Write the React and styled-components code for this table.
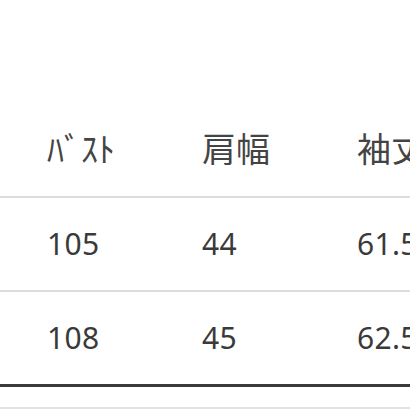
import React from "react";
import styled, { createGlobalStyle } from "styled-components";

const Global = createGlobalStyle`
  html, body { margin: 0; padding: 0; background: #fff; overflow: hidden; }
  body { font-family: "Noto Sans", "Noto Sans CJK JP", sans-serif; }
`;

const Page = styled.div`
  width: 410px;
  height: 410px;
  overflow: hidden;
  padding-top: 104px;
  box-sizing: border-box;
`;

const Table = styled.div`
  width: 620px;
  border-bottom: 3px solid #3a3a3a;
`;

const Row = styled.div`
  display: grid;
  grid-template-columns: repeat(4, 155px);
  height: ${(p) => p.$h}px;
  align-items: center;
  border-bottom: ${(p) => (p.$last ? "none" : "2px solid #dcdcdc")};
`;

const Cell = styled.div`
  padding-left: 47px;
  white-space: nowrap;
  color: ${(p) => (p.$head ? "#444" : "#3a3a3a")};
  font-family: ${(p) =>
    p.$head
      ? '"Noto Sans CJK JP", sans-serif'
      : '"Noto Sans", "Noto Sans CJK JP", sans-serif'};
  font-size: ${(p) => (p.$head ? "34px" : "30px")};
  line-height: 1;
  letter-spacing: ${(p) => (p.$head ? "0" : "0.3px")};
  transform: ${(p) => (p.$head ? "translateY(-2px)" : "none")};
`;

const Bottom = styled.div`
  margin-top: 20px;
  border-top: 2px solid #e2e2e2;
`;

const head = ["ﾊﾞｽﾄ", "肩幅", "袖丈", "着丈"];
const rows = [
  ["105", "44", "61.5", "70"],
  ["108", "45", "62.5", "72"],
];

export default function App() {
  return (
    <>
      <Global />
      <Page>
        <Table>
          <Row $h={92}>
            {head.map((h) => (
              <Cell $head key={h}>{h}</Cell>
            ))}
          </Row>
          {rows.map((r, i) => (
            <Row $h={92} key={i} $last={i === rows.length - 1}>
              {r.map((c, j) => (
                <Cell key={j}>{c}</Cell>
              ))}
            </Row>
          ))}
        </Table>
        <Bottom />
      </Page>
    </>
  );
}
